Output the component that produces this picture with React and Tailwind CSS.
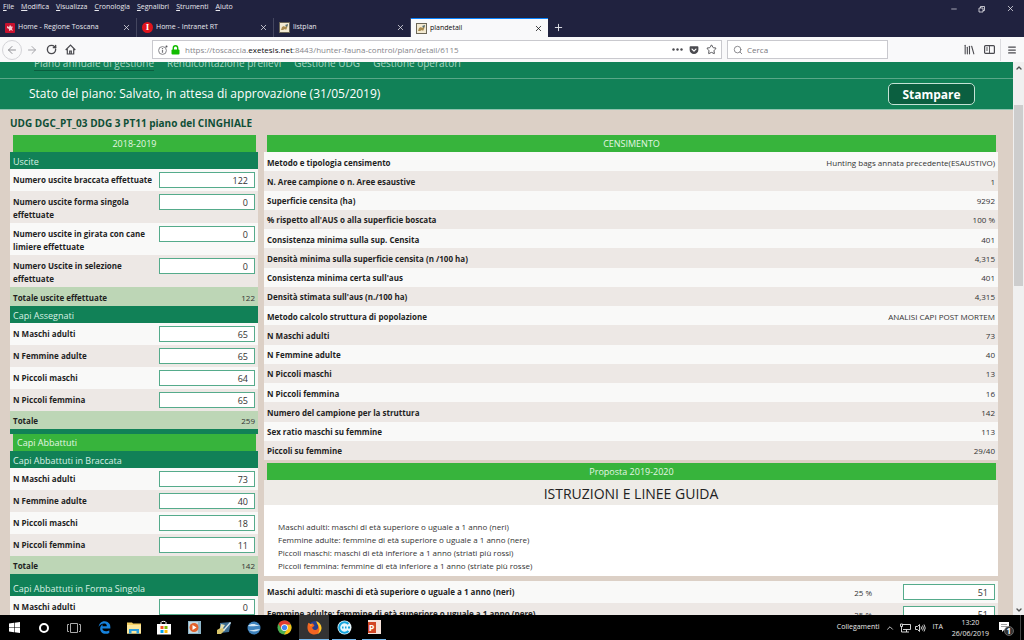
import React, { useState } from 'react';
import { ArrowLeft, ArrowRight, ChevronDown, ChevronUp, Library, Menu, Minus, Plus, RotateCw, Search, Star, X } from 'lucide-react';
import { FaEdgeLegacy, FaGetPocket } from 'react-icons/fa';

const menus = ['File', 'Modifica', 'Visualizza', 'Cronologia', 'Segnalibri', 'Strumenti', 'Aiuto'];

const navLinks = ['Piano annuale di gestione', 'Rendicontazione prelievi', 'Gestione UDG', 'Gestione operatori'];

const uscite = [
  { label: 'Numero uscite braccata effettuate', value: '122' },
  { label: 'Numero uscite forma singola effettuate', value: '0' },
  { label: 'Numero uscite in girata con cane limiere effettuate', value: '0' },
  { label: 'Numero Uscite in selezione effettuate', value: '0' },
];

const assegnati = [
  { label: 'N Maschi adulti', value: '65' },
  { label: 'N Femmine adulte', value: '65' },
  { label: 'N Piccoli maschi', value: '64' },
  { label: 'N Piccoli femmina', value: '65' },
];

const braccata = [
  { label: 'N Maschi adulti', value: '73' },
  { label: 'N Femmine adulte', value: '40' },
  { label: 'N Piccoli maschi', value: '18' },
  { label: 'N Piccoli femmina', value: '11' },
];

const singola = [{ label: 'N Maschi adulti', value: '0' }];

const censimento = [
  ['Metodo e tipologia censimento', 'Hunting bags annata precedente(ESAUSTIVO)'],
  ['N. Aree campione o n. Aree esaustive', '1'],
  ['Superficie censita (ha)', '9292'],
  ["% rispetto all'AUS o alla superficie boscata", '100 %'],
  ['Consistenza minima sulla sup. Censita', '401'],
  ['Densità minima sulla superficie censita (n /100 ha)', '4,315'],
  ["Consistenza minima certa sull'aus", '401'],
  ["Densità stimata sull'aus (n./100 ha)", '4,315'],
  ['Metodo calcolo struttura di popolazione', 'ANALISI CAPI POST MORTEM'],
  ['N Maschi adulti', '73'],
  ['N Femmine adulte', '40'],
  ['N Piccoli maschi', '13'],
  ['N Piccoli femmina', '16'],
  ['Numero del campione per la struttura', '142'],
  ['Sex ratio maschi su femmine', '113'],
  ['Piccoli su femmine', '29/40'],
];

const proposta = [
  { label: 'Maschi adulti: maschi di età superiore o uguale a 1 anno (neri)', percent: '25 %', value: '51' },
  { label: 'Femmine adulte: femmine di età superiore o uguale a 1 anno (nere)', percent: '25 %', value: '51' },
];

const BoarIcon = () => (
  <svg viewBox="0 0 11 11" className="h-[11px] w-[11px] shrink-0">
    <rect x="0.5" y="0.5" width="10" height="10" fill="#f3ead2" stroke="#6b6657" />
    <path d="M2 8l1-3 2-1 1 1 3-3-1 4-1 2-1-1-2 1z" fill="#a88a4e" />
    <path d="M6 3l3-1-1 3z" fill="#4f6d7a" />
  </svg>
);

const ToscanaIcon = () => (
  <svg viewBox="0 0 10 10" className="h-[10px] w-[10px] shrink-0">
    <rect width="10" height="10" rx="1" fill="#c8102e" />
    <path d="M2 3l2 1 1-2 2 2 1-1-1 3 1 2-2-1-2 1V6L2 5z" fill="#f4c9cf" />
  </svg>
);

const IntranetIcon = () => (
  <span className="flex h-[11px] w-[11px] shrink-0 items-center justify-center rounded-full bg-[#e0141c] font-['Liberation_Serif',serif] text-[9px] font-bold text-white">
    I
  </span>
);

const tabs = [
  { title: 'Home - Regione Toscana', icon: <ToscanaIcon /> },
  { title: 'Home - Intranet RT', icon: <IntranetIcon /> },
  { title: 'listplan', icon: <BoarIcon /> },
  { title: 'plandetail', icon: <BoarIcon />, active: true },
];

const TitleBar = () => (
  <header className="bg-[#20223f] text-[#e8e8ee]">
    <div className="flex h-[18px] items-start justify-between">
      <nav className="flex gap-[7px] pl-[3px] text-[7px] leading-[13px]">
        {menus.map((menu) => (
          <button key={menu} type="button">
            <span className="underline">{menu[0]}</span>
            {menu.slice(1)}
          </button>
        ))}
      </nav>
      <div className="flex gap-[20px] pt-[4px] pr-[9px]">
        <button type="button" aria-label="Riduci a icona"><Minus size={8} strokeWidth={2} /></button>
        <button type="button" aria-label="Ripristina">
          <svg viewBox="0 0 8 8" className="h-[8px] w-[8px]" fill="none" stroke="currentColor" strokeWidth="0.8">
            <path d="M1 3h4v4H1zM2.500 3V1.500h4v4H5" />
          </svg>
        </button>
        <button type="button" aria-label="Chiudi"><X size={9} strokeWidth={2} /></button>
      </div>
    </div>
    <div className="flex h-[19px] text-[7px]">
      {tabs.map((tab) => (
        <div
          key={tab.title}
          className={
            tab.active
              ? 'flex w-[137px] items-center gap-[3px] border-t border-[#0a84ff] bg-[#f9f9fa] px-[5px] text-[#0c0c0d]'
              : 'flex w-[137px] items-center gap-[3px] border-r border-[#44465f] px-[5px]'
          }
        >
          {tab.icon}
          <button type="button" className="min-w-0 flex-1 truncate text-left">{tab.title}</button>
          <button type="button" aria-label={`Chiudi ${tab.title}`}><X size={9} strokeWidth={2} /></button>
        </div>
      ))}
      <button type="button" aria-label="Nuova scheda" className="px-[5px]"><Plus size={11} strokeWidth={2} /></button>
    </div>
  </header>
);

const Toolbar = () => (
  <div className="flex h-[25px] shrink-0 items-center bg-[#f9f9fa] pr-[7px] text-[#4a4a4f]">
    <div className="flex w-[152px] shrink-0 items-center gap-[8px] pl-[2px]">
      <button type="button" aria-label="Indietro" className="flex h-[20px] w-[20px] items-center justify-center rounded-full border border-[#d4d4d8] text-[#8d8d92]">
        <ArrowLeft size={12} strokeWidth={2} />
      </button>
      <button type="button" aria-label="Avanti" className="-ml-[4px] text-[#a5a5aa]"><ArrowRight size={12} strokeWidth={2} /></button>
      <button type="button" aria-label="Ricarica"><RotateCw size={11} strokeWidth={3} /></button>
      <button type="button" aria-label="Pagina iniziale">
        <svg viewBox="0 0 11 11" className="h-[11px] w-[11px]" fill="none" stroke="currentColor" strokeWidth="1.2">
          <path d="M0.7 6L5.5 1l4.8 5M2.3 5v5h6.400V5" />
          <path d="M4.700 10V7h1.600v3" />
        </svg>
      </button>
    </div>
    <div className="flex h-[19px] min-w-0 flex-1 items-center gap-[3px] border border-[#c9c9ce] bg-white pr-[4px] pl-[5px]">
      <svg viewBox="0 0 10 10" className="h-[10px] w-[10px] shrink-0" fill="none" stroke="#77777c">
        <circle cx="4.500" cy="5.500" r="3.900" strokeWidth="0.900" />
        <path d="M4.500 4.800v3M4.500 3v1" strokeWidth="1.200" />
        <circle cx="8.500" cy="1.500" r="1" fill="#55555a" stroke="none" />
      </svg>
      <svg viewBox="0 0 9 10" className="h-[10px] w-[9px] shrink-0">
        <path d="M2.300 5V3a2.200 2.200 0 014.400 0v2" fill="none" stroke="#12bc00" strokeWidth="1.400" />
        <rect x="0.500" y="4.500" width="8" height="5" rx="1" fill="#12bc00" />
      </svg>
      <p className="min-w-0 flex-1 truncate pl-[2px] text-[8px] text-[#85858a]">
        https://toscaccia.<span className="text-[#0c0c0d]">exetesis.net</span>:8443/hunter-fauna-control/plan/detail/6115
      </p>
      <button type="button" aria-label="Azioni pagina">
        <svg viewBox="0 0 11 3" className="h-[3px] w-[11px]" fill="currentColor">
          <circle cx="1.500" cy="1.500" r="1.200" /><circle cx="5.500" cy="1.500" r="1.200" /><circle cx="9.500" cy="1.500" r="1.200" />
        </svg>
      </button>
      <button type="button" aria-label="Pocket" className="ml-[3px]"><FaGetPocket size={10} /></button>
      <button type="button" aria-label="Aggiungi ai segnalibri" className="ml-[4px]"><Star size={11} strokeWidth={2} /></button>
    </div>
    <label className="ml-[5px] flex h-[19px] w-[161px] items-center gap-[4px] border border-[#c9c9ce] bg-white px-[5px]">
      <Search size={10} strokeWidth={2} className="text-[#77777c]" />
      <input type="search" aria-label="Cerca" placeholder="Cerca" className="min-w-0 flex-1 text-[8px] outline-none placeholder:text-[#77777c]" />
    </label>
    <div className="flex items-center gap-[8px] pl-[75px]">
      <button type="button" aria-label="Libreria"><Library size={13} strokeWidth={2} /></button>
      <button type="button" aria-label="Barra laterale">
        <svg viewBox="0 0 11 9" className="h-[9px] w-[11px]" fill="none" stroke="currentColor">
          <rect x="0.600" y="0.600" width="9.800" height="7.800" rx="1" strokeWidth="1.200" />
          <path d="M5.500 1v7M2 3h2M2 5h2" strokeWidth="0.900" />
        </svg>
      </button>
      <button type="button" aria-label="Apri menu" className="-ml-[3px] border-l border-[#dcdcdf] py-[6px] pl-[6px]"><Menu size={10} strokeWidth={3} /></button>
    </div>
  </div>
);

const NumberField = ({ id, initial }) => {
  const [value, setValue] = useState(initial);
  return (
    <input
      id={id}
      type="text"
      inputMode="numeric"
      value={value}
      onChange={(e) => setValue(e.target.value)}
      className="block h-[16px] w-full border border-[#55ab8b] bg-white px-[6px] pt-[1px] text-right text-[9px] text-[#333333] outline-none"
    />
  );
};

const SectionTable = ({ id, title, rows, total, tall }) => (
  <table className="w-full table-fixed border-collapse text-[8px] leading-[13px]">
    <colgroup>
      <col />
      <col className="w-[99px]" />
    </colgroup>
    <thead>
      <tr className={tall ? 'h-[22px] bg-[#118157]' : 'h-[17px] bg-[#118157]'}>
        <th
          colSpan={2}
          className={
            tall
              ? 'px-[3px] pt-[6px] text-left text-[9px] font-normal text-[#d8f0e4]'
              : 'px-[3px] pt-[2px] text-left text-[9px] font-normal text-[#d8f0e4]'
          }
        >
          {title}
        </th>
      </tr>
    </thead>
    <tbody>
      {rows.map((row, i) => (
        <tr key={row.label} className="h-[22px] align-top odd:bg-[#f9f9f8] even:bg-[#ede8e5]">
          <th className="pt-[4px] pb-[2px] pl-[3px] text-left font-bold">
            <label htmlFor={`${id}-${i}`}>{row.label}</label>
          </th>
          <td className="pt-[3px] pr-[3px]">
            <NumberField id={`${id}-${i}`} initial={row.value} />
          </td>
        </tr>
      ))}
    </tbody>
    {total && (
      <tfoot>
        <tr className={total.tall ? 'h-[19px] bg-[#bdd6b6]' : 'h-[18px] bg-[#bdd6b6]'}>
          <th className="px-[3px] pt-[1px] text-left font-bold">{total.label}</th>
          <td className="px-[3px] pt-[1px] text-right text-[#333333]">{total.value}</td>
        </tr>
      </tfoot>
    )}
  </table>
);

const Banner = ({ children }) => (
  <h2 className="mr-[2px] ml-[3px] h-[17px] bg-[#37b43c] text-center text-[9px] leading-[18px] text-[#e4f6e4]">{children}</h2>
);

const PlanTables = () => (
  <div className="flex gap-[6px] pr-[15px] pl-[10px]">
    <section className="w-[248px] shrink-0">
      <Banner>2018-2019</Banner>
      <SectionTable id="uscite" title="Uscite" rows={uscite} total={{ label: 'Totale uscite effettuate', value: '122', tall: true }} />
      <SectionTable id="assegnati" title="Capi Assegnati" rows={assegnati} total={{ label: 'Totale', value: '259' }} />
      <div className="h-[5px] bg-[#118157]" />
      <h2 className="mr-[2px] ml-[3px] h-[17px] bg-[#37b43c] px-[4px] text-[9px] leading-[18px] text-[#e4f6e4]">Capi Abbattuti</h2>
      <SectionTable id="braccata" title="Capi Abbattuti in Braccata" rows={braccata} total={{ label: 'Totale', value: '142' }} />
      <SectionTable id="singola" title="Capi Abbattuti in Forma Singola" rows={singola} tall />
    </section>

    <section className="min-w-0 flex-1">
      <Banner>CENSIMENTO</Banner>
      <table className="h-[308px] w-full border-collapse text-[8px] leading-[13px]">
        <tbody>
          {censimento.map(([label, value]) => (
            <tr key={label} className="odd:bg-[#f9f9f8] even:bg-[#ede8e5]">
              <th className="px-[3px] pt-[1px] text-left font-bold">{label}</th>
              <td className="px-[3px] pt-[1px] text-right text-[#333333]">{value}</td>
            </tr>
          ))}
        </tbody>
      </table>
      <div className="h-[3px]" />
      <Banner>Proposta 2019-2020</Banner>
      <h3 className="bg-[#eeebe7] pt-[2px] text-center text-[14px] leading-[23px] text-[#222222]">ISTRUZIONI E LINEE GUIDA</h3>
      <div className="mb-[5px] bg-white px-[14px] pt-[15px] pb-[4px] text-[8px] leading-[13px] text-[#333333]">
        <p>Maschi adulti: maschi di età superiore o uguale a 1 anno (neri)</p>
        <p>Femmine adulte: femmine di età superiore o uguale a 1 anno (nere)</p>
        <p>Piccoli maschi: maschi di età inferiore a 1 anno (striati più rossi)</p>
        <p>Piccoli femmina: femmine di età inferiore a 1 anno (striate più rosse)</p>
      </div>
      <table className="w-full border-collapse text-[8px] leading-[13px]">
        <tbody>
          {proposta.map((row, i) => (
            <tr key={row.label} className="h-[22px] align-top odd:bg-[#f9f9f8] even:bg-[#ede8e5]">
              <th className="px-[3px] pt-[4px] text-left font-bold">
                <label htmlFor={`proposta-${i}`}>{row.label}</label>
              </th>
              <td className="w-[60px] pt-[5px] text-right text-[#333333]">{row.percent}</td>
              <td className="w-[126px] pt-[3px] pr-[3px] pl-[31px]">
                <NumberField id={`proposta-${i}`} initial={row.value} />
              </td>
            </tr>
          ))}
        </tbody>
      </table>
    </section>
  </div>
);

const StoreIcon = () => (
  <svg viewBox="0 0 16 16" className="h-[16px] w-[16px]">
    <path d="M5 4V2.500C5 1 10 1 10 2.500V4" fill="none" stroke="#fff" />
    <path d="M1 4h14v10.500H1z" fill="#fff" />
    <path d="M4.500 6h3v3h-3z" fill="#f25022" /><path d="M8.500 6h3v3h-3z" fill="#7fba00" />
    <path d="M4.500 10h3v3h-3z" fill="#00a4ef" /><path d="M8.500 10h3v3h-3z" fill="#ffb900" />
  </svg>
);

const ChromeIcon = () => (
  <svg viewBox="0 0 16 16" className="h-[15px] w-[15px]">
    <circle cx="8" cy="8" r="7.500" fill="#4caf50" />
    <path d="M1.500 4.200A7.500 7.500 0 0114.800 5H8L5 9.500z" fill="#e33b2e" />
    <path d="M14.800 5A7.500 7.500 0 017.500 15.500L11 9.500 8 5z" fill="#fbc116" />
    <circle cx="8" cy="8" r="3.600" fill="#fff" />
    <circle cx="8" cy="8" r="2.800" fill="#4285f4" />
  </svg>
);

const FirefoxIcon = () => (
  <svg viewBox="0 0 16 16" className="h-[15px] w-[15px]">
    <circle cx="8.500" cy="7.500" r="6.500" fill="#253f8f" />
    <path d="M1.500 3l2 1.500C4.500 3.500 6 3.500 6.500 4L8 6 5.500 8c.5 3 4 3.500 6 1 1-2 .5-4-1-5.500 3 1 4 2.500 4.500 4C15.500 12 12 15.500 8 15.500S.5 12.500.5 8.500c0-2 .2-4 1-5.500z" fill="#f26522" />
    <path d="M10 1c3 1.500 5.500 4 5.500 7.500 0 3-2 5.500-4.500 6.500 2-2 2.500-4 2-6.500C12.500 5 10 4 10 1z" fill="#ffc928" />
    <path d="M2 3l1.500 1.500L6 5 4 7z" fill="#ff9a26" />
  </svg>
);

const taskbarApps = [
  {
    name: 'Attività',
    icon: (
      <svg viewBox="0 0 14 12" className="h-[12px] w-[14px]" fill="none" stroke="#aaa">
        <path d="M3.500 1.500h7v9h-7zM2 2.500H.5v7H2M12 2.500h1.500v7H12" />
      </svg>
    ),
  },
  { name: 'Edge', icon: <FaEdgeLegacy size={13} color="#1683dd" /> },
  {
    name: 'Esplora file',
    icon: (
      <svg viewBox="0 0 14 12" className="h-[12px] w-[14px]">
        <path d="M0 0.500h5l1 1h8v10H0z" fill="#f5cf63" />
        <path d="M0 3h14v8.500H0z" fill="#fde79c" />
        <path d="M2 11.500V7h10v4.500H9.500V9h-5v2.500z" fill="#2d9fdf" />
      </svg>
    ),
  },
  { name: 'Store', icon: <StoreIcon /> },
  {
    name: 'Lettore multimediale',
    icon: (
      <svg viewBox="0 0 13 13" className="h-[13px] w-[13px]">
        <rect width="13" height="13" fill="#8fb6c9" /><path d="M1 1h9v11H1z" fill="#c5d8e0" />
        <circle cx="6" cy="6.500" r="4.500" fill="#e2622c" /><path d="M4.500 4l4 2.500-4 2.500z" fill="#fff" />
      </svg>
    ),
  },
  {
    name: 'Mappe',
    icon: (
      <svg viewBox="0 0 15 13" className="h-[13px] w-[15px]">
        <path d="M3 2l11-1-2 10-9 1z" fill="#3d6d91" /><path d="M0 9l5-3 3 3-4 4H0z" fill="#d9c56a" />
        <path d="M4 3l4 1-2 3-3 1z" fill="#e7e0b0" /><path d="M6 9l7-8 1 1-7 8z" fill="#dfe9ee" />
      </svg>
    ),
  },
  {
    name: 'Google Earth',
    icon: (
      <svg viewBox="0 0 14 14" className="h-[14px] w-[14px]">
        <circle cx="7" cy="7" r="6.500" fill="#3f83bd" />
        <path d="M1 5c3-3 8-2 12 0-4-.5-7 1-12 0zM1 8.500c4 2 7-1 12 0-2 2-8 3-12 0z" fill="#d5e8f5" />
      </svg>
    ),
  },
  { name: 'Chrome', icon: <ChromeIcon /> },
  { name: 'Firefox', icon: <FirefoxIcon />, focused: true },
  {
    name: 'TeamViewer',
    open: true,
    icon: (
      <svg viewBox="0 0 15 15" className="h-[15px] w-[15px]">
        <circle cx="7.500" cy="7.500" r="7" fill="#e6f7fd" />
        <path d="M11.500 4A5.300 5.300 0 1011.500 11" fill="none" stroke="#13a3dc" strokeWidth="2" />
        <path d="M5 7.500h1.500M8 7.500h1.500M11 7.500h2" stroke="#13a3dc" strokeWidth="1.800" />
      </svg>
    ),
  },
  {
    name: 'PowerPoint',
    open: true,
    icon: (
      <span className="flex h-[14px] w-[13px] items-center bg-[#f7e3da] text-[9px] leading-none font-bold text-white">
        <span className="flex h-[11px] w-[8px] items-center justify-center bg-[#d24726]">P</span>
      </span>
    ),
  },
];

const Taskbar = () => (
  <footer className="flex h-[25px] shrink-0 items-stretch bg-black text-[7px] text-[#e8e8e8]">
    <button type="button" aria-label="Start" className="flex w-[29px] items-center justify-center">
      <svg viewBox="0 0 11 11" className="h-[11px] w-[11px]" fill="#fff">
        <path d="M0 1.500L5 .8v4.400H0zM5.600.7L11 0v5.200H5.600zM0 5.800h5v4.400L0 9.500zM5.600 5.800H11V11l-5.400-.7z" />
      </svg>
    </button>
    <button type="button" aria-label="Cortana" className="flex w-[30px] items-center justify-center">
      <span className="h-[10px] w-[10px] rounded-full border-2 border-white" />
    </button>
    {taskbarApps.map((app) => (
      <button
        key={app.name}
        type="button"
        aria-label={app.name}
        className={
          app.focused
            ? 'flex w-[30px] items-center justify-center border-b border-[#76b9ed] bg-[#333333]'
            : app.open
              ? 'mx-[3px] flex w-[24px] items-center justify-center border-b border-[#76b9ed]'
              : 'flex w-[30px] items-center justify-center'
        }
      >
        {app.icon}
      </button>
    ))}
    <div className="ml-auto flex items-center">
      <span>Collegamenti</span>
      <ChevronUp size={10} strokeWidth={2} className="ml-[5px]" />
      <svg viewBox="0 0 11 10" className="ml-[5px] h-[10px] w-[11px]" fill="none" stroke="currentColor" strokeWidth="0.900">
        <path d="M3 1.500h7.500v5H3M4 9h5M6.500 6.500V9M.5 1h2v2.500h-2zM1.500 3.500V9H4" />
      </svg>
      <svg viewBox="0 0 11 10" className="ml-[4px] h-[10px] w-[11px]" fill="none" stroke="currentColor" strokeWidth="0.900">
        <path d="M.5 3.500h2l2-2v7l-2-2h-2zM6 3.500q1 1.500 0 3M7.500 2.500q1.800 2.500 0 5M9 1.500q2.500 3.500 0 7" />
      </svg>
      <span className="ml-[7px]">ITA</span>
      <span className="ml-[9px] text-center leading-[11px]">
        13:20
        <br />
        26/06/2019
      </span>
      <button type="button" aria-label="Notifiche" className="relative mr-[6px] ml-[10px] h-[16px] w-[15px]">
        <svg viewBox="0 0 15 16" className="h-[16px] w-[15px]">
          <path d="M0 2h10v8H5l-2 2v-2H0z" fill="#fff" />
          <path d="M2 4.500h6M2 6.500h6" stroke="#888" strokeWidth="0.800" />
          <circle cx="10" cy="11" r="4.500" fill="#333" stroke="#777" strokeWidth="0.800" />
        </svg>
        <span className="absolute right-[3px] bottom-0 text-[8px] leading-[10px] font-bold text-white">1</span>
      </button>
      <span className="h-full w-[4px] border-l border-[#444444]" />
    </div>
  </footer>
);

const App = () => {
  return (
    <div className="flex h-screen flex-col overflow-hidden font-['Open_Sans','Noto_Sans',sans-serif]">
      <TitleBar />
      <Toolbar />
      <div className="flex min-h-0 flex-1">
        <main className="min-w-0 flex-1 overflow-hidden bg-[#dcd0c6] text-[#1f1f1f]">
          <nav className="flex h-[17px] items-end gap-[13px] overflow-hidden border-b border-[#5aa888] bg-[#118157] pb-[7px] pl-[34px] text-[10px] leading-[14px] text-[#a9d8c3]">
            {navLinks.map((link, i) => (
              <a key={link} href="#" className={i === 0 ? 'border-b border-[#0b5e3f]' : 'border-b border-transparent'}>{link}</a>
            ))}
          </nav>
          <div className="flex h-[31px] items-center justify-between border-b border-[#8fc4ae] bg-[#118157] pr-[38px] pl-[29px]">
            <p className="text-[12px] text-white">Stato del piano: Salvato, in attesa di approvazione (31/05/2019)</p>
            <button type="button" className="h-[22px] w-[87px] rounded-[5px] border border-[#c4e2d5] bg-[#0b5f40] pt-[1px] text-[12px] leading-[19px] font-bold text-white">
              Stampare
            </button>
          </div>
          <h1 className="pt-[1px] pl-[10px] text-[10px] leading-[24px] font-bold text-[#0e4f36]">UDG DGC_PT_03 DDG 3 PT11 piano del CINGHIALE</h1>
          <PlanTables />
        </main>
        <div className="flex w-[11px] shrink-0 flex-col items-center bg-[#f0f0f0] text-[#505050]">
          <ChevronUp size={8} strokeWidth={4} className="my-[2px]" />
          <div className="mt-[31px] h-[181px] w-[9px] bg-[#cdcdcd]" />
          <ChevronDown size={8} strokeWidth={4} className="mt-auto mb-[1px]" />
        </div>
      </div>
      <Taskbar />
    </div>
  );
};

export default App;
